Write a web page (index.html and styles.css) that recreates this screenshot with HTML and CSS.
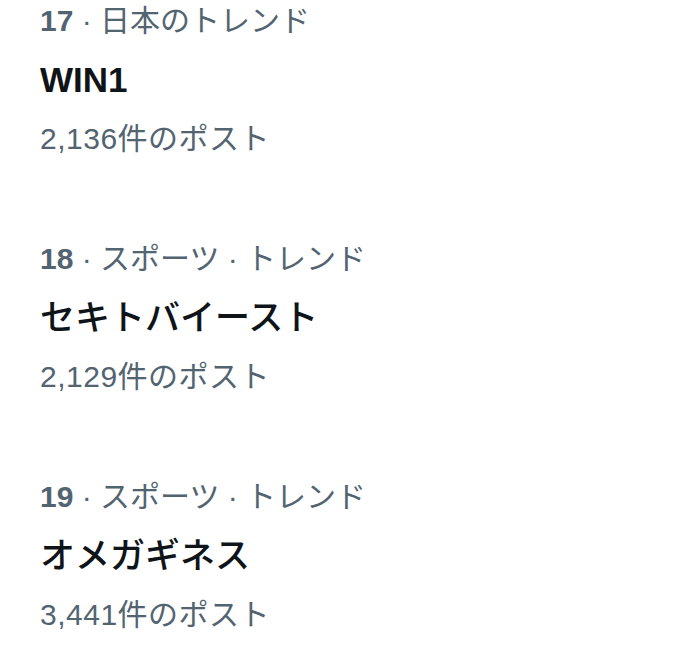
FILE: index.html
```html
<!DOCTYPE html>
<html lang="ja">
<head>
  <meta charset="utf-8">
  <title>トレンド</title>
  <link rel="stylesheet" href="styles.css">
</head>
<body>
  <div class="trend-list">
    <div class="trend-item">
      <div class="trend-meta"><span class="rank">17</span> · 日本のトレンド</div>
      <div class="trend-name latin">WIN1</div>
      <div class="trend-count">2,136件のポスト</div>
    </div>
    <div class="trend-item">
      <div class="trend-meta"><span class="rank">18</span> · スポーツ · トレンド</div>
      <div class="trend-name">セキトバイースト</div>
      <div class="trend-count">2,129件のポスト</div>
    </div>
    <div class="trend-item">
      <div class="trend-meta"><span class="rank">19</span> · スポーツ · トレンド</div>
      <div class="trend-name">オメガギネス</div>
      <div class="trend-count">3,441件のポスト</div>
    </div>
  </div>
</body>
</html>
```

FILE: styles.css
```css
body {
  margin: 0;
  background-color: #fff;
  font-family: "Liberation Sans", "Noto Sans CJK JP", sans-serif;
}

.trend-list {
  padding-left: 40px;
  display: flex;
  flex-direction: column;
  gap: 79px;
}

.trend-item {
  padding-top: 1px;
}

.trend-meta {
  color: #536471;
  font-size: 30px;
  line-height: 40px;
}

.rank {
  font-weight: bold;
}

.trend-name {
  color: #0f1419;
  font-size: 35px;
  font-weight: 500;
  line-height: 40px;
  margin-top: 19px;
}

.trend-name.latin {
  font-weight: bold;
}

.trend-count {
  color: #536471;
  font-size: 30px;
  line-height: 40px;
  letter-spacing: 0.5px;
  margin-top: 19px;
}
```
